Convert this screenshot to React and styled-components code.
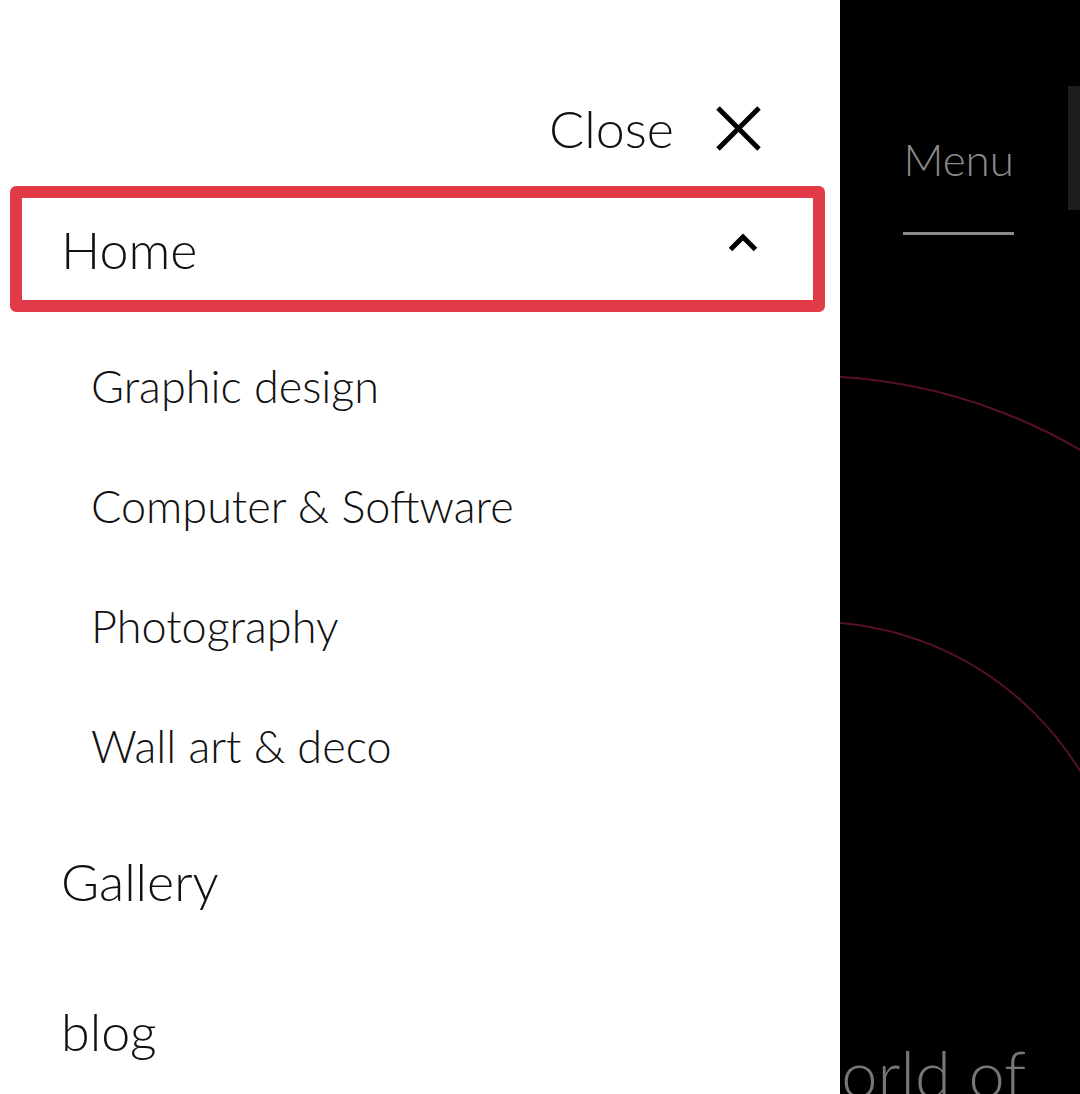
import React from 'react';
import styled, { createGlobalStyle } from 'styled-components';

const GlobalStyle = createGlobalStyle`
  * {
    box-sizing: border-box;
  }
  html, body {
    margin: 0;
    padding: 0;
    background: #000;
    overflow: hidden;
  }
  body {
    font-family: Lato, "Noto Sans", "Liberation Sans", sans-serif;
  }
`;

const subLinks = ["Graphic design", "Computer & Software", "Photography", "Wall art & deco"];

export default function App() {
    return (
        <>
            <GlobalStyle />
            <Page>
                <Rings width="1080" height="1094" viewBox="0 0 1080 1094">
                    <circle cx="808" cy="913" r="537" />
                    <circle cx="814" cy="934" r="312" />
                </Rings>
                <Header>
                    <MenuButton>Menu</MenuButton>
                    <SideStub />
                </Header>
                <Hero>
                    <HeroTitle>world of</HeroTitle>
                </Hero>
            </Page>
            <Drawer>
                <CloseRow>
                    <CloseLabel>Close</CloseLabel>
                    <svg width="45" height="45" viewBox="0 0 45 45" fill="none" stroke="#000" strokeWidth="5">
                        <line x1="2" y1="2" x2="43" y2="43" />
                        <line x1="43" y1="2" x2="2" y2="43" />
                    </svg>
                </CloseRow>
                <MainItem $active>
                    Home
                    <Chevron width="30" height="19" viewBox="0 0 30 19" fill="none" stroke="#000" strokeWidth="5">
                        <polyline points="2.5,16.5 15,4 27.5,16.5" />
                    </Chevron>
                </MainItem>
                <SubList>
                    {subLinks.map(link => (
                        <SubItem key={link}>{link}</SubItem>
                    ))}
                </SubList>
                <MainItem>Gallery</MainItem>
                <MainItem>blog</MainItem>
            </Drawer>
        </>
    )
}

const Page = styled.div`
    position: relative;
    width: 100%;
    height: 1094px;
    background-color: #000;
    overflow: hidden;
    display: flex;
    flex-direction: column;
`
const Rings = styled.svg`
    position: absolute;
    top: 0;
    left: 0;
    fill: none;
    stroke: #561126;
    stroke-width: 2;
`
const Header = styled.div`
    position: relative;
    display: flex;
    justify-content: flex-end;
    align-items: flex-start;
    gap: 54px;
    padding-top: 86px;
`
const MenuButton = styled.div`
    margin-top: 47px;
    padding-bottom: 47px;
    border-bottom: 3px solid #8a8a8a;
    font-size: 44px;
    font-weight: 300;
    color: #8a8a8a;
`
const SideStub = styled.div`
    width: 12px;
    height: 124px;
    background-color: #1d1d1d;
`
const Hero = styled.div`
    position: relative;
    flex: 1;
    display: flex;
    align-items: flex-end;
`
const HeroTitle = styled.h1`
    margin: 0 0 -12px 792px;
    font-size: 65px;
    font-weight: 300;
    line-height: 1;
    color: #777;
    white-space: nowrap;
`
const Drawer = styled.nav`
    position: fixed;
    top: 0;
    left: 0;
    width: 840px;
    height: 100%;
    background-color: #fff;
    display: flex;
    flex-direction: column;
    overflow: hidden;
    z-index: 10;
`
const CloseRow = styled.div`
    flex-shrink: 0;
    margin-top: 83px;
    margin-bottom: 13px;
    height: 90px;
    padding-right: 79px;
    display: flex;
    justify-content: flex-end;
    align-items: center;
    gap: 42px;
`
const CloseLabel = styled.span`
    font-size: 52px;
    font-weight: 300;
    color: #111;
`
const MainItem = styled.div`
    flex-shrink: 0;
    height: ${props => props.$active ? '126px' : '150px'};
    margin: 0 15px 0 10px;
    padding: 0 55px 0 39px;
    border: 12px solid ${props => props.$active ? '#e03b46' : 'transparent'};
    border-radius: 6px;
    display: flex;
    align-items: center;
    justify-content: space-between;
    font-size: 52px;
    font-weight: 300;
    color: #111;
`
const Chevron = styled.svg`
    margin-bottom: 14px;
`
const SubList = styled.div`
    flex-shrink: 0;
    padding-top: 14px;
    display: flex;
    flex-direction: column;
`
const SubItem = styled.div`
    flex-shrink: 0;
    height: 120px;
    padding-left: 91px;
    display: flex;
    align-items: center;
    font-size: 45px;
    font-weight: 300;
    color: #111;
`
